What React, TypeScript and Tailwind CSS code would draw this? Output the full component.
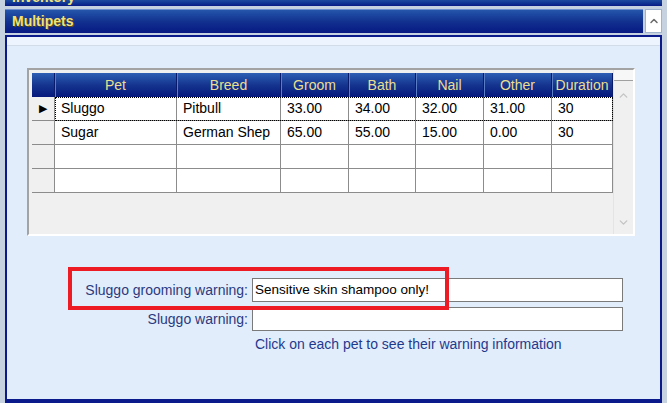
import { ChevronUp, ChevronDown } from 'lucide-react'

type Pet = { pet: string; breed: string; groom: string; bath: string; nail: string; other: string; duration: string }

const pets: Pet[] = [
  { pet: 'Sluggo', breed: 'Pitbull', groom: '33.00', bath: '34.00', nail: '32.00', other: '31.00', duration: '30' },
  { pet: 'Sugar', breed: 'German Shep', groom: '65.00', bath: '55.00', nail: '15.00', other: '0.00', duration: '30' },
]

const cols = [
  { key: 'pet', label: 'Pet', w: 'w-[122px]' },
  { key: 'breed', label: 'Breed', w: 'w-[104px]' },
  { key: 'groom', label: 'Groom', w: 'w-[68px]' },
  { key: 'bath', label: 'Bath', w: 'w-[67px]' },
  { key: 'nail', label: 'Nail', w: 'w-[68px]' },
  { key: 'other', label: 'Other', w: 'w-[68px]' },
  { key: 'duration', label: 'Duration', w: 'w-[61px]' },
] as const

function Row({ p, selected }: { p?: Pet; selected?: boolean }) {
  return (
    <div className="flex h-[24px]">
      <div className="w-[23px] shrink-0 bg-[#f0f0f0] border-r border-b border-[#8c8c8c] flex items-center justify-center">
        {selected && <span className="text-[11px] text-black leading-none">▶</span>}
      </div>
      <div className={`flex ${selected ? 'outline outline-1 outline-dotted outline-black -outline-offset-1' : ''}`}>
        {cols.map(c => (
          <div
            key={c.key}
            className={`${c.w} shrink-0 bg-white border-r border-b border-[#8c8c8c] px-[6px] pt-[3px] text-[14px] leading-[16px] text-black truncate`}
          >
            {p ? p[c.key] : ''}
          </div>
        ))}
      </div>
    </div>
  )
}

export default function App() {
  return (
    <div className="relative w-[667px] h-[403px] overflow-hidden bg-[#c6d2e0] font-['Liberation_Sans',Arial,sans-serif]">
      {/* collapsed section above */}
      <div className="h-[6px] mx-[5px] overflow-hidden bg-gradient-to-b from-[#1d4ba0] to-[#0a1a86]">
        <div className="mt-[-11px] pl-[7px] text-[14px] leading-[16px] font-bold text-[#f2e27a]">Inventory</div>
      </div>

      {/* Multipets header */}
      <div className="flex h-[24px] mt-[3px] mx-[5px]">
        <div className="flex-1 flex items-center pl-[7px] bg-gradient-to-b from-[#2556ab] via-[#12318f] to-[#081883] border-t border-[#6d8fd0]">
          <span className="text-[14px] font-bold text-[#f2e27a] [text-shadow:1px_1px_0_#5a4a10]">Multipets</span>
        </div>
        <div className="w-[17px] ml-[2px] bg-white border border-[#9fb4cc] flex items-center justify-center">
          <ChevronUp size={12} strokeWidth={3} className="text-[#6a6a6a]" />
        </div>
      </div>

      {/* panel */}
      <div className="mt-[2px] mx-[5px] h-[368px] border-2 border-b-4 border-[#0b1a8a] bg-[#e2edfc]">
        <div className="h-[9px] bg-[#eef4fd] border-b border-[#d2dbe8]" />

        {/* grid */}
        <div className="ml-[20px] mt-[22px] w-[608px] h-[168px] border-2 border-[#a3a3a3] border-b-white border-r-white bg-[#f0f0f0] flex pl-[3px] pt-[3px]">
          <div className="w-[581px] shrink-0">
            <div className="flex h-[24px] bg-gradient-to-b from-[#2f5fb5] via-[#15348f] to-[#07177c]">
              <div className="w-[23px] shrink-0 border-r border-[#0a1a6a]" />
              {cols.map(c => (
                <div
                  key={c.key}
                  className={`${c.w} shrink-0 border-r border-[#0a1a6a] shadow-[inset_1px_0_0_#5a7cc4] flex items-center justify-center text-[14px] text-[#eadf8e]`}
                >
                  {c.label}
                </div>
              ))}
            </div>
            <Row p={pets[0]} selected />
            <Row p={pets[1]} />
            <Row />
            <Row />
          </div>
          <div className="w-[20px] shrink-0 -mt-[3px] h-[164px] flex flex-col items-center bg-[#f0f0f0] border-l border-[#e4e4e4]">
            <div className="w-full h-[11px] border-b border-[#a0a0a0] bg-[#f7f7f7]" />
            <ChevronUp size={13} strokeWidth={2.5} className="mt-[8px] text-[#c4c4c4]" />
            <div className="flex-1" />
            <ChevronDown size={13} strokeWidth={2.5} className="mb-[5px] text-[#c4c4c4]" />
          </div>
        </div>

        {/* warnings */}
        <div className="mt-[42px] flex flex-col gap-[5px]">
          <div className="flex items-center">
            <div className="w-[241px] text-right text-[14px] text-[#2b3a7c]">Sluggo grooming warning:</div>
            <div className="ml-[4px] w-[371px] h-[24px] bg-white border border-[#7a7a7a] pl-[2px] flex items-center text-[13.5px] text-black">
              Sensitive skin shampoo only!
            </div>
          </div>
          <div className="flex items-center">
            <div className="w-[241px] text-right text-[14px] text-[#2b3a7c]">Sluggo warning:</div>
            <div className="ml-[4px] w-[371px] h-[24px] bg-white border border-[#7a7a7a]" />
          </div>
        </div>
        <div className="mt-[3px] pl-[248px] text-[14px] text-[#1f3a8c]">Click on each pet to see their warning information</div>
      </div>

      {/* highlight annotation */}
      <div className="absolute left-[68px] top-[267px] w-[381px] h-[43px] border-[4px] border-[#ed1c24]" />
    </div>
  )
}
